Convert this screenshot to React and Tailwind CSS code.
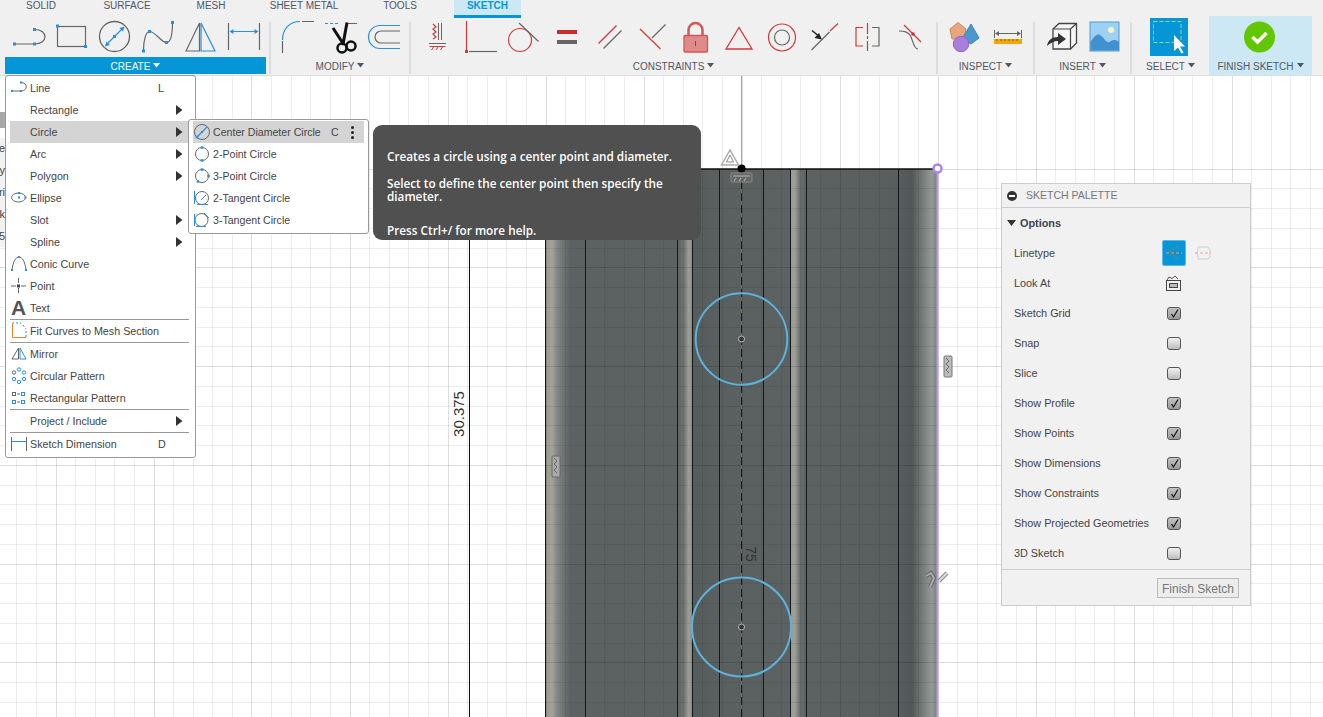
import React from "react";

// icons are drawn in page coordinates, the viewBox just cuts out the icon's cell
const Ico = ({ x, y = 20, w, h = 37, children, className = "" }) => (
  <svg
    width={w}
    height={h}
    viewBox={`${x} ${y} ${w} ${h}`}
    fill="none"
    className={`block shrink-0 ${className}`}
  >
    {children}
  </svg>
);

const BLUE = "#2a8fe0";
const GRAY = "#666";
const RED = "#d1393c";

const Sq = ({ x, y, s = 3, c = BLUE }) => (
  <rect x={x - s / 2} y={y - s / 2} width={s} height={s} fill={c} />
);

const Caret = ({ className = "" }) => (
  <svg width="7" height="5" viewBox="0 0 7 5" className={`inline-block ${className}`}>
    <path d="M0 0h7L3.5 4.5z" fill="currentColor" />
  </svg>
);

const Sep = () => <div className="w-[2px] h-[52px] bg-[#dcdcdc] shrink-0 mt-[2px]" />;

const GroupLabel = ({ children, className = "" }) => (
  <div
    className={`h-[17px] pt-[1px] flex items-center justify-center gap-[3px] text-[10px] text-[#4f5666] ${className}`}
  >
    {children}
    <Caret className="mb-[2px]" />
  </div>
);

const tabs = [
  ["SOLID", "w-[72px]"],
  ["SURFACE", "w-[100px]"],
  ["MESH", "w-[68px]"],
  ["SHEET METAL", "w-[118px]"],
  ["TOOLS", "w-[74px]"],
];

const Toolbar = () => (
  <header className="h-[76px] shrink-0 bg-[#f0f0f0] border-b border-[#dcdcdc]">
    <div className="h-[18px] flex pl-[5px] text-[10px] text-[#4f5666]">
      {tabs.map(([t, w]) => (
        <div key={t} className={`${w} h-[11px] leading-[11px] text-center`}>
          {t}
        </div>
      ))}
      <div className="ml-[17px] w-[67px] h-[18px] bg-[#cce8f5] border-b-[3px] border-[#0696d7] text-[#0696d7] flex items-start justify-center font-bold text-[10px] leading-[11px]">
        SKETCH
      </div>
    </div>
    <div className="flex h-[57px] pt-[2px]">
      {/* CREATE */}
      <div className="ml-[5px] w-[261px] shrink-0">
        <div className="h-[37px] flex pl-[2px]">
          <Ico x={7} w={43}>
            <path d="M14.5 44H34M34.5 29.5c14 0 14 14.5 0 14.5" stroke={GRAY} strokeWidth="1.2" />
            <Sq x={14.5} y={44} />
            <Sq x={34.5} y={44} />
            <Sq x={34.5} y={29.5} />
          </Ico>
          <Ico x={50} w={43}>
            <rect x="57.5" y="26.5" width="28" height="20" stroke={GRAY} strokeWidth="1.2" />
            <Sq x={57.5} y={26} />
            <Sq x={85.5} y={46.5} />
          </Ico>
          <Ico x={93} w={43}>
            <circle cx="114.5" cy="36.5" r="15" stroke={GRAY} strokeWidth="1.3" />
            <path d="M106 45l17-17" stroke={BLUE} strokeWidth="1.2" />
            <path d="M105 46.5l1.5-5 3.5 3.5zM124.5 26.5l-1.5 5-3.5-3.5z" fill={BLUE} />
            <Sq x={114.5} y={36.5} />
          </Ico>
          <Ico x={136} w={43}>
            <path d="M143.5 51c0-10 2-19 6-19.5 6 0 11 10.5 17 11 5 0 6-12 6-20.5" stroke={GRAY} strokeWidth="1.2" />
            <Sq x={143.5} y={51} />
            <Sq x={149.5} y={31.5} />
            <Sq x={166.5} y={42.5} />
            <Sq x={172.5} y={22.5} />
          </Ico>
          <Ico x={179} w={43}>
            <path d="M186 51l13.5-28V51z" stroke={GRAY} strokeWidth="1.2" />
            <path d="M201 23l14 28h-14z" stroke={BLUE} strokeWidth="1.2" />
          </Ico>
          <Ico x={222} w={44}>
            <path d="M228.5 23v27M259.5 23v27" stroke={GRAY} strokeWidth="1.2" />
            <path d="M230 31.5h28" stroke={BLUE} strokeWidth="1" />
            <path d="M229.5 31.5l4-2.5v5zM258.5 31.5l-4-2.5v5z" fill={BLUE} />
          </Ico>
        </div>
        <div className="h-[17px] pt-[1px] bg-[#0696d7] text-white text-[10px] flex items-center justify-center gap-[3px]">
          CREATE
          <Caret className="mb-[2px]" />
        </div>
      </div>
      <div className="w-[3px]" />
      <Sep />
      {/* MODIFY */}
      <div className="w-[138px] shrink-0">
        <div className="h-[37px] flex">
          <Ico x={271} w={50}>
            <path d="M282.5 40c0-11 7-18.5 17.5-18.5" stroke={BLUE} strokeWidth="1.2" />
            <path d="M282.5 41v12M302 21.5h12" stroke={GRAY} strokeWidth="1.2" />
          </Ico>
          <Ico x={321} w={45}>
            <path d="M325 23.5h15" stroke={BLUE} strokeWidth="1" strokeDasharray="3 2" />
            <path d="M348 23.5h9" stroke={GRAY} strokeWidth="1" />
            <path d="M333 28l11 17M347 22.5l-4 22" stroke="#111" strokeWidth="3" />
            <circle cx="342" cy="48" r="4.5" stroke="#111" strokeWidth="2.5" />
            <circle cx="351" cy="46" r="4.5" stroke="#111" strokeWidth="2.5" />
          </Ico>
          <Ico x={366} w={43}>
            <path d="M400 25.5h-20a11.5 11.5 0 0 0 0 23h20" stroke={BLUE} strokeWidth="1.2" />
            <path d="M400 31h-19a6 6 0 0 0 0 12h19" stroke={GRAY} strokeWidth="1.2" />
          </Ico>
        </div>
        <GroupLabel>MODIFY</GroupLabel>
      </div>
      <Sep />
      {/* CONSTRAINTS */}
      <div className="w-[525px] shrink-0">
        <div className="h-[37px] flex">
          <Ico x={411} w={48}>
            <path d="M438.5 23v17M441.5 23v17M429 43.5h17" stroke={GRAY} strokeWidth="1" />
            <path d="M433 24l3 3-3 2 3 3-3 2 3 3-3 2" stroke={RED} strokeWidth="1.2" />
            <path d="M429.5 46.5h16M431.5 50l2-3M436 50l2-3M440.5 50l2-3" stroke={RED} strokeWidth="1" />
          </Ico>
          <Ico x={459} w={41}>
            <path d="M466.5 21v29" stroke={RED} strokeWidth="1.2" />
            <path d="M469 51.5h28" stroke={GRAY} strokeWidth="1.2" />
            <Sq x={466.5} y={51.5} c={RED} />
          </Ico>
          <Ico x={500} w={45}>
            <circle cx="520" cy="40" r="11.5" stroke={RED} strokeWidth="1.2" />
            <path d="M519 23l19.5 18.5" stroke={GRAY} strokeWidth="1.2" />
          </Ico>
          <Ico x={545} w={44}>
            <rect x="557" y="30" width="20" height="4" fill="#c62c2e" />
            <rect x="557" y="40" width="20" height="4" fill="#666" />
          </Ico>
          <Ico x={589} w={43}>
            <path d="M598.5 43.5l18-18" stroke={RED} strokeWidth="1.2" />
            <path d="M603.5 48.5l18-18" stroke={GRAY} strokeWidth="1.2" />
          </Ico>
          <Ico x={632} w={43}>
            <path d="M640 29l20.5 20" stroke={RED} strokeWidth="1.2" />
            <path d="M652 38l13.5-13.5" stroke={GRAY} strokeWidth="1.2" />
          </Ico>
          <Ico x={675} w={42}>
            <path d="M688.5 36v-6a7 7 0 0 1 14 0v6" stroke="#d0585a" strokeWidth="2.5" />
            <rect x="684" y="35.5" width="23.5" height="16.5" rx="1" fill="#e08a8c" stroke="#d0585a" strokeWidth="1.3" />
            <path d="M695.5 41v5" stroke="#b83336" strokeWidth="1" />
          </Ico>
          <Ico x={717} w={44}>
            <path d="M739 27.5L726 49h26z" stroke={RED} strokeWidth="1.3" />
          </Ico>
          <Ico x={761} w={43}>
            <circle cx="782" cy="37.5" r="13.5" stroke={RED} strokeWidth="1.2" />
            <circle cx="782" cy="37.5" r="7.5" stroke={GRAY} strokeWidth="1.2" />
          </Ico>
          <Ico x={804} w={42}>
            <path d="M811.5 50l18-18" stroke={GRAY} strokeWidth="1.2" />
            <path d="M830 31l8-7.5" stroke={RED} strokeWidth="1.2" />
            <path d="M812 30.5l6 5" stroke="#222" strokeWidth="1.5" />
            <path d="M822 39.5l-7.5-1.5 4.5-5z" fill="#222" />
          </Ico>
          <Ico x={846} w={43}>
            <path d="M867.5 23v11M867.5 36v3M867.5 41v10M863 27.5h-7V46h7" stroke={RED} strokeWidth="1.2" />
            <path d="M872 27.5h7V46h-7" stroke={GRAY} strokeWidth="1.2" />
          </Ico>
          <Ico x={889} w={47}>
            <path d="M899 31c6 0 8 1 11 4 3 4 3 14 8 14" stroke={GRAY} strokeWidth="1.2" />
            <path d="M904 25l17 17" stroke={RED} strokeWidth="1.2" />
            <Sq x={913} y={34} c="#c62c2e" />
          </Ico>
        </div>
        <GroupLabel>CONSTRAINTS</GroupLabel>
      </div>
      <Sep />
      {/* INSPECT */}
      <div className="w-[95px] shrink-0">
        <div className="h-[37px] flex">
          <Ico x={938} w={48}>
            <path d="M950 29l8-6.5 8 6.5-2 10h-12z" fill="#e9a57e" stroke="#c98a63" strokeWidth="1" />
            <path d="M971 24l8 14-8 6-9-5z" fill="#4c97cf" stroke="#3b85bc" strokeWidth="1" />
            <circle cx="961" cy="44" r="7.7" fill="#a97fdd" stroke="#8f66c4" strokeWidth="1" />
          </Ico>
          <Ico x={986} w={47}>
            <path d="M994.5 30v8M1021.5 30v8" stroke={GRAY} strokeWidth="1" />
            <path d="M996 33.5h24" stroke={GRAY} strokeWidth="1" />
            <path d="M995 33.5l4-2.5v5zM1021 33.5l-4-2.5v5z" fill={GRAY} />
            <rect x="994" y="39" width="28" height="5" fill="#f4a700" />
            <path d="M997 39v2M1001 39v2M1005 39v2M1009 39v2M1013 39v2M1017 39v2" stroke="#8a5f00" strokeWidth="1" />
          </Ico>
        </div>
        <GroupLabel>INSPECT</GroupLabel>
      </div>
      <Sep />
      {/* INSERT */}
      <div className="w-[95px] shrink-0">
        <div className="h-[37px] flex">
          <Ico x={1035} w={48}>
            <path d="M1053 29l6-5.5h17.5V43l-6 6H1053z" fill="#f6f6f6" stroke="#444" strokeWidth="1.3" />
            <path d="M1053 29h17.5v20M1070.5 29l6-5.5" stroke="#444" strokeWidth="1.2" />
            <path d="M1047 46c1-6 5-9 11-9v-4l8 6-8 6v-4c-4 0-8 2-11 5z" fill="#333" />
          </Ico>
          <Ico x={1083} w={47}>
            <rect x="1090" y="22" width="29" height="29" fill="#9ed0f2" stroke="#4b9bd6" strokeWidth="1" />
            <path d="M1090.5 50.5V42c5-8 8-9 11-6 3 3 5 7 8 6 3-2 5-3 9.5 0v8.5z" fill="#4190cf" />
            <circle cx="1111" cy="30" r="3" fill="#f7f3c4" />
          </Ico>
        </div>
        <GroupLabel>INSERT</GroupLabel>
      </div>
      <Sep />
      {/* SELECT */}
      <div className="w-[77px] shrink-0">
        <div className="h-[37px] flex -mt-[2px]">
          <Ico x={1132} y={18} w={77} h={39}>
            <rect x="1150" y="18" width="38" height="38" fill="#0696d7" />
            <rect x="1153.5" y="21.5" width="27.5" height="21" stroke="#7fe08a" strokeWidth="1" strokeDasharray="4 2" />
            <path d="M1174 35v16l4-3.5 3.5 6 2-1-3.5-6h5z" fill="#fff" />
          </Ico>
        </div>
        <GroupLabel className="mt-[2px]">SELECT</GroupLabel>
      </div>
      {/* FINISH SKETCH */}
      <div className="w-[103px] shrink-0 -mt-[4px] h-[59px] bg-[#cce8f5] pt-[4px]">
        <div className="h-[37px] flex">
          <Ico x={1209} w={103}>
            <circle cx="1259.5" cy="37" r="15.5" fill="#62c700" />
            <path d="M1252.5 37l5 5 9-9" stroke="#fff" strokeWidth="3.5" />
          </Ico>
        </div>
        <GroupLabel>FINISH SKETCH</GroupLabel>
      </div>
    </div>
  </header>
);

// the viewport: drawing of the model and its sketch
const stopAt = (x, color) => (
  <stop key={x} offset={(x - 546) / 391} stopColor={color} />
);

const bodyStops = [
  [546, "#9a9a90"],
  [552, "#a3a399"],
  [558, "#7e8380"],
  [570, "#5c6261"],
  [677, "#5b6261"],
  [684, "#6f7472"],
  [689, "#a0a097"],
  [691.5, "#8d8f88"],
  [693, "#565c5b"],
  [720, "#5a605f"],
  [790, "#5b6261"],
  [791, "#9c9c93"],
  [795, "#9d9e95"],
  [800, "#6a6f6d"],
  [806, "#5b6261"],
  [898, "#585e5d"],
  [912, "#525857"],
  [925, "#7e8481"],
  [932, "#939995"],
  [937, "#7a807d"],
];

const vGrid = [];
for (let i = -37; i <= 30; i++) vGrid.push({ x: 741.5 + i * 19.6, major: i % 5 === 0 });
const hGrid = [];
for (let i = 0; i <= 28; i++) hGrid.push({ y: 168.5 + i * 19.75, major: i % 5 === 0 });

const Viewport = () => (
  <svg
    width="1323"
    height="641"
    viewBox="0 76 1323 641"
    className="block shrink-0 bg-white"
    fill="none"
  >
    <defs>
      <linearGradient id="body" gradientUnits="userSpaceOnUse" x1="546" x2="937" y1="0" y2="0">
        {bodyStops.map(([x, c]) => stopAt(x, c))}
      </linearGradient>
    </defs>
    <rect x="546" y="169" width="391" height="548" fill="url(#body)" />
    {vGrid.map((l) => (
      <path
        key={l.x}
        d={`M${Math.round(l.x) + 0.5} 76V717`}
        stroke={l.major ? "rgba(0,0,0,.13)" : "rgba(0,0,0,.07)"}
      />
    ))}
    {hGrid.map((l) => (
      <path
        key={l.y}
        d={`M0 ${Math.round(l.y) + 0.5}H1323`}
        stroke={l.major ? "rgba(0,0,0,.13)" : "rgba(0,0,0,.07)"}
      />
    ))}
    {[545.5, 585.5, 677.5, 692.5, 719.5, 763.5, 790.5, 806.5, 898.5].map((x) => (
      <path key={x} d={`M${x} 169V717`} stroke="#10181c" />
    ))}
    <path d="M469.5 169V717" stroke="#111" />
    <path d="M469 169H937" stroke="#111" strokeWidth="1.6" />
    <path d="M741.5 76V169" stroke="#86bb86" />
    <path d="M741.5 169V717" stroke="#3f8f3f" />
    <path d="M741.5 169V717" stroke="#16201a" strokeDasharray="8 4" />
    <path d="M937.5 172V717" stroke="#b79ee4" strokeWidth="2" />
    <circle cx="937.5" cy="168.5" r="4" stroke="#b183e6" strokeWidth="2.5" fill="#fff" />
    <circle cx="741.5" cy="168.5" r="4" fill="#000" />

    <circle cx="741.5" cy="339" r="45.8" stroke="#5db3dc" strokeWidth="2" />
    <circle cx="741.5" cy="627" r="49.5" stroke="#5db3dc" strokeWidth="2" />
    <circle cx="741.5" cy="339" r="3" fill="#333" stroke="#bbb" />
    <circle cx="741.5" cy="627" r="3" fill="#333" stroke="#bbb" />

    {/* constraint glyphs */}
    <path d="M730 150l-8.5 15h17z" stroke="#aaa" strokeWidth="1.5" fill="#fff" />
    <path d="M730 155l-3.5 7h7z" stroke="#888" strokeWidth="1" fill="#fff" />
    <rect x="731" y="173" width="21" height="9" rx="1" fill="#666" stroke="#888" />
    <path d="M733 176h17M734 181l2-3M739 181l2-3M744 181l2-3" stroke="#ccc" strokeWidth=".8" />
    <rect x="944" y="356" width="8" height="21" rx="1" fill="#bbb" stroke="#777" />
    <path d="M946 358l3 3-3 3 3 3-3 3 3 3" stroke="#555" strokeWidth=".8" />
    <rect x="552" y="456" width="8" height="21" rx="1" fill="#aaa" stroke="#666" />
    <path d="M554 458l3 3-3 3 3 3-3 3 3 3" stroke="#555" strokeWidth=".8" />
    <path d="M926 576l5-3 3 5-4 9" stroke="#666" strokeWidth="4" />
    <path d="M926 576l5-3 3 5-4 9" stroke="#aaa" strokeWidth="2" />
    <path d="M939 581l8-8" stroke="#888" strokeWidth="4" />
    <path d="M939 581l8-8" stroke="#ddd" strokeWidth="2" />

    {/* dimensions */}
    <text
      transform="translate(464 414) rotate(-90)"
      textAnchor="middle"
      fontFamily="'Liberation Sans', sans-serif"
      fontSize="15"
      fill="#333"
    >
      30.375
    </text>
    <text
      transform="translate(746 554) rotate(90)"
      textAnchor="middle"
      fontFamily="'Liberation Sans', sans-serif"
      fontSize="14"
      fill="#333"
    >
      75
    </text>
  </svg>
);

const Arrow = () => (
  <svg width="7" height="10" viewBox="0 0 7 10" className="block">
    <path d="M0 0l6.5 5L0 10z" fill="#333" />
  </svg>
);

const MenuRow = ({ top, label, icon, shortcut, arrow, active }) => (
  <div className={`h-[22px] flex items-center relative pr-[6px] ${active ? "bg-[#d4d4d4]" : ""}`}>
    <div className="w-[20px] h-[22px] shrink-0">
      {icon && (
        <Ico x={10} y={top} w={20} h={22}>
          {icon}
        </Ico>
      )}
    </div>
    <span className="flex-1 whitespace-nowrap">{label}</span>
    {shortcut && <span className="absolute left-[148px]">{shortcut}</span>}
    {arrow && <Arrow />}
  </div>
);

const MenuLine = () => <div className="h-[1px] bg-[#999]" />;

const createItems1 = [
  {
    label: "Line",
    shortcut: "L",
    top: 77,
    icon: (
      <>
        <path d="M12 91h9M21 82.5c7 0 7 8.5 0 8.5" stroke={GRAY} />
        <Sq x={12} y={91} s={2} />
        <Sq x={21} y={91} s={2} />
        <Sq x={21} y={82.5} s={2} />
      </>
    ),
  },
  { label: "Rectangle", arrow: true, top: 99 },
  { label: "Circle", arrow: true, active: true, top: 121 },
  { label: "Arc", arrow: true, top: 143 },
  { label: "Polygon", arrow: true, top: 165 },
  {
    label: "Ellipse",
    top: 187,
    icon: (
      <>
        <ellipse cx="18.5" cy="197.5" rx="7" ry="4.5" stroke={GRAY} />
        <Sq x={19} y={193} s={2} />
        <Sq x={19} y={197.5} s={2} />
        <Sq x={25.5} y={197.5} s={2} />
      </>
    ),
  },
  { label: "Slot", arrow: true, top: 209 },
  { label: "Spline", arrow: true, top: 231 },
  {
    label: "Conic Curve",
    top: 253,
    icon: (
      <>
        <path d="M12 270c1-9 4-13 7-13s6 4 7 13" stroke={GRAY} />
        <Sq x={12} y={270} s={2} />
        <Sq x={19} y={257} s={2} />
        <Sq x={26} y={270} s={2} />
      </>
    ),
  },
  {
    label: "Point",
    top: 275,
    icon: (
      <>
        <path d="M11 286h5M21 286h5M18.5 278v5M18.5 288v5" stroke={GRAY} />
        <rect x="17" y="284.5" width="3" height="3" fill="#444" />
      </>
    ),
  },
];

const createItems2 = [
  {
    label: "Mirror",
    top: 343,
    icon: (
      <>
        <path d="M12 359l6.5-11v11z" stroke={GRAY} />
        <path d="M20 348l6 11h-6z" stroke={BLUE} />
      </>
    ),
  },
  {
    label: "Circular Pattern",
    top: 365,
    icon: (
      <>
        <circle cx="19" cy="369.5" r="1.7" stroke={BLUE} />
        <circle cx="24" cy="372.5" r="1.7" stroke={BLUE} />
        <circle cx="24" cy="379" r="1.7" stroke={BLUE} />
        <circle cx="19" cy="382" r="1.7" stroke={BLUE} />
        <circle cx="14" cy="379" r="1.7" stroke={BLUE} />
        <circle cx="14" cy="372.5" r="1.7" stroke={GRAY} />
      </>
    ),
  },
  {
    label: "Rectangular Pattern",
    top: 387,
    icon: (
      <>
        <rect x="12.5" y="392.5" width="3" height="3" stroke={GRAY} />
        <rect x="21.5" y="392.5" width="3" height="3" stroke={BLUE} />
        <rect x="12.5" y="400.5" width="3" height="3" stroke={BLUE} />
        <rect x="21.5" y="400.5" width="3" height="3" stroke={BLUE} />
        <path d="M17 394h3M17 402h3" stroke={GRAY} />
      </>
    ),
  },
];

const CreateMenu = () => (
  <div className="absolute left-[5px] top-[75px] w-[191px] h-[383px] bg-white border border-[#999] rounded-[3px] pt-[1px] pl-[4px] pr-[6px] text-[10.75px] text-[#444]">
    {createItems1.map((it) => (
      <MenuRow key={it.label} {...it} />
    ))}
    <div className="h-[22px] flex items-center">
      <span className="w-[20px] shrink-0 font-bold text-[21px] leading-[22px] text-[#555] pl-[1px]">A</span>
      <span>Text</span>
    </div>
    <MenuLine />
    <MenuRow
      label="Fit Curves to Mesh Section"
      top={320}
      icon={
        <>
          <path d="M12.5 324v13.5H26" stroke="#e8812d" />
          <path d="M12 323h9M23 325l3 4M26 331v6" stroke={BLUE} strokeDasharray="2 2" />
        </>
      }
    />
    <MenuLine />
    {createItems2.map((it) => (
      <MenuRow key={it.label} {...it} />
    ))}
    <MenuLine />
    <MenuRow label="Project / Include" arrow top={410} />
    <MenuLine />
    <MenuRow
      label="Sketch Dimension"
      shortcut="D"
      top={433}
      icon={
        <>
          <path d="M11.5 437v14M26.5 437v14" stroke={GRAY} />
          <path d="M12 441.5h14" stroke={BLUE} />
        </>
      }
    />
  </div>
);

const circleItems = [
  {
    label: "Center Diameter Circle",
    top: 121,
    icon: (
      <>
        <circle cx="202" cy="132" r="7.5" stroke={GRAY} />
        <path d="M197 137l10-10" stroke={BLUE} strokeWidth="1.2" />
        <Sq x={197} y={137} s={2.5} />
        <Sq x={202} y={132} s={2} />
      </>
    ),
  },
  {
    label: "2-Point Circle",
    top: 143,
    icon: (
      <>
        <circle cx="202" cy="154" r="6.5" stroke={GRAY} />
        <Sq x={202} y={147.5} s={2.5} />
        <Sq x={202} y={160.5} s={2.5} />
      </>
    ),
  },
  {
    label: "3-Point Circle",
    top: 165,
    icon: (
      <>
        <circle cx="202" cy="176" r="6.5" stroke={GRAY} />
        <Sq x={202} y={169.5} s={2.5} />
        <Sq x={208.5} y={176} s={2.5} />
        <Sq x={198} y={181.5} s={2.5} />
      </>
    ),
  },
  {
    label: "2-Tangent Circle",
    top: 187,
    icon: (
      <>
        <circle cx="202" cy="198" r="6.5" stroke={GRAY} />
        <path d="M194.5 191v13M197 204.5h11M201 200l5-5" stroke={BLUE} />
      </>
    ),
  },
  {
    label: "3-Tangent Circle",
    top: 209,
    icon: (
      <>
        <circle cx="201.5" cy="220" r="6.5" stroke={GRAY} />
        <path d="M196 226.5h10M204 213l5 5M194.5 214v12" stroke={BLUE} />
      </>
    ),
  },
];

const CircleMenu = () => (
  <div className="absolute left-[188px] top-[119px] w-[181px] h-[115px] bg-white border border-[#999] rounded-[3px] pt-[1px] px-[4px] text-[10.6px] text-[#444]">
    {circleItems.map((it, i) => (
      <div
        key={it.label}
        className={`h-[22px] flex items-center relative ${i === 0 ? "bg-[#d4d4d4]" : ""}`}
      >
        <div className="w-[20px] h-[22px] shrink-0">
          <Ico x={193} y={it.top} w={20} h={22}>
            {it.icon}
          </Ico>
        </div>
        <span className="whitespace-nowrap pt-[1px]">{it.label}</span>
        {i === 0 && (
          <>
            <span className="absolute left-[138px] top-[4px]">C</span>
            <span className="absolute left-[158px] top-[5px] flex flex-col gap-[2px]">
              <i className="block w-[3px] h-[3px] bg-[#222] rounded-full" />
              <i className="block w-[3px] h-[3px] bg-[#222] rounded-full" />
              <i className="block w-[3px] h-[3px] bg-[#222] rounded-full" />
            </span>
          </>
        )}
      </div>
    ))}
  </div>
);

const Tooltip = () => (
  <div className="absolute left-[373px] top-[125px] w-[328px] h-[115px] bg-[#505050] rounded-[9px] pl-[14px] pt-[25px] text-white font-semibold text-[11.75px] leading-[13px] font-['Open_Sans',sans-serif]">
    <p>Creates a circle using a center point and diameter.</p>
    <p className="mt-[14px]">
      Select to define the center point then specify the
      <br />
      diameter.
    </p>
    <p className="mt-[21px]">Press Ctrl+/ for more help.</p>
  </div>
);

const CheckBox = ({ on }) => (
  <div
    className={`w-[14px] h-[13px] rounded-[3px] border border-[#555] flex items-center justify-center bg-gradient-to-b ${
      on ? "from-[#c4c4c4] to-[#9a9a9a]" : "from-[#f2f2f2] to-[#bdbdbd]"
    }`}
  >
    {on && (
      <svg width="11" height="11" viewBox="0 0 11 11" fill="none">
        <path d="M2.5 6l2 3L9 1.5" stroke="#111" strokeWidth="1.2" />
      </svg>
    )}
  </div>
);

const paletteRows = [
  ["Sketch Grid", true],
  ["Snap", false],
  ["Slice", false],
  ["Show Profile", true],
  ["Show Points", true],
  ["Show Dimensions", true],
  ["Show Constraints", true],
  ["Show Projected Geometries", true],
  ["3D Sketch", false],
];

const SketchPalette = () => (
  <div className="absolute left-[1001px] top-[183px] w-[250px] h-[423px] bg-[#f1f1f1] border border-[#ccc] text-[10.85px] text-[#444]">
    <div className="h-[24px] border-b border-[#ccc] flex items-center pl-[5px]">
      <div className="w-[10px] h-[10px] rounded-full bg-[#333] flex items-center justify-center">
        <div className="w-[6px] h-[2px] bg-white" />
      </div>
      <span className="ml-[9px] text-[10.5px] text-[#777]">SKETCH PALETTE</span>
    </div>
    <div className="h-[30px] flex items-center pl-[5px] font-bold text-[#3c4350]">
      <svg width="9" height="6" viewBox="0 0 9 6" className="mr-[4px]">
        <path d="M0 0h9L4.5 6z" fill="#333" />
      </svg>
      Options
    </div>
    <div className="h-[30px] flex items-center pl-[12px]">
      <span className="w-[148px]">Linetype</span>
      <div className="w-[24px] h-[26px] bg-[#0696d7] border border-[#5ab8e6] rounded-[2px] flex items-center justify-center">
        <svg width="18" height="18" viewBox="0 0 18 18" fill="none">
          <path d="M1 9h16" stroke="#f0a060" strokeDasharray="3 2" />
          <path d="M13 2L5 8l8 7" stroke="#9a7a50" />
        </svg>
      </div>
      <svg width="18" height="18" viewBox="0 0 18 18" fill="none" className="ml-[8px]">
        <path d="M4 3h10l2 3v7l-2 2H4V11L2 9l2-2z" stroke="#ccc" />
        <path d="M1 9h16" stroke="#f0a878" strokeDasharray="3 2" />
      </svg>
    </div>
    <div className="h-[30px] flex items-center pl-[12px]">
      <span className="w-[151px]">Look At</span>
      <svg width="17" height="17" viewBox="0 0 17 17" fill="none">
        <rect x="1.5" y="5.5" width="14" height="10" stroke="#444" />
        <rect x="4.5" y="8.5" width="8" height="4" fill="#bbb" stroke="#444" />
        <path d="M2 5l2-3 3 1.5L10 1l3 3" stroke="#555" />
      </svg>
    </div>
    {paletteRows.map(([label, on]) => (
      <div key={label} className="h-[30px] flex items-center pl-[12px]">
        <span className="w-[153px] whitespace-nowrap">{label}</span>
        <CheckBox on={on} />
      </div>
    ))}
    <div className="mt-[1px] border-t border-[#ccc] pt-[8px] flex justify-end pr-[11px]">
      <button className="w-[82px] h-[20px] pt-[1px] border border-[#bbb] bg-[#ececec] text-[12px] text-[#777] flex items-center justify-center">
        Finish Sketch
      </button>
    </div>
  </div>
);

// scraps of the browser panel that stick out left of the menu
const LeftScraps = () => (
  <div className="absolute left-0 top-[112px] w-[5px] h-[135px] overflow-hidden text-[11px] text-[#444] flex flex-col">
    <div className="h-[16px] bg-[#a8a8a8]" />
    <div className="h-[10px] bg-white" />
    {["e", "y", "ri", "k", "5"].map((t) => (
      <div key={t} className="h-[22px] bg-[#f2f2f2] flex items-center justify-end">
        <span className="whitespace-nowrap">{t}</span>
      </div>
    ))}
  </div>
);

export default function App() {
  return (
    <div className="relative w-[1323px] h-[717px] overflow-hidden flex flex-col bg-white font-['Liberation_Sans',Arial,sans-serif]">
      <Toolbar />
      <Viewport />
      <LeftScraps />
      <CreateMenu />
      <CircleMenu />
      <Tooltip />
      <SketchPalette />
    </div>
  );
}
